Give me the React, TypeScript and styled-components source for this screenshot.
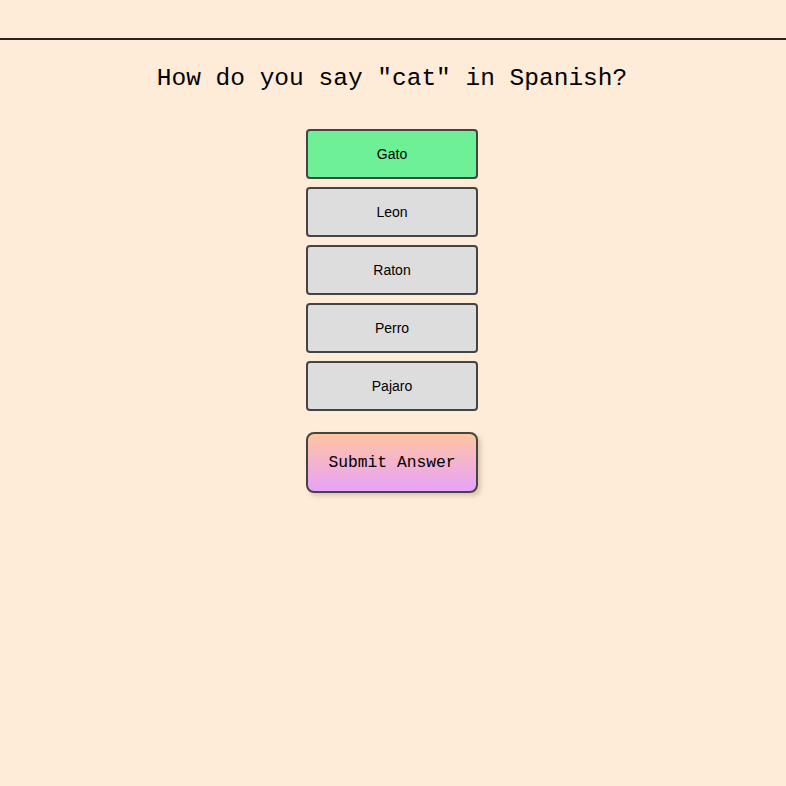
import React, { useState } from "react";
import styled, { createGlobalStyle } from "styled-components";

const GlobalStyle = createGlobalStyle`
  html, body {
    margin: 0;
    padding: 0;
    background: #feebd8;
  }
  body {
    font-family: "Liberation Sans", Arial, sans-serif;
    min-height: 786px;
  }
`;

const Header = styled.header`
  height: 38px;
  border-bottom: 2px solid #2a2220;
`;

const Main = styled.main`
  display: flex;
  flex-direction: column;
  align-items: center;
  padding-right: 2px;
`;

const Question = styled.h1`
  margin: 23px 0 34px;
  font-family: "Liberation Mono", "DejaVu Sans Mono", monospace;
  font-weight: 400;
  font-size: 24.5px;
  line-height: 32px;
  color: #000;
`;

const Options = styled.div`
  display: flex;
  flex-direction: column;
  gap: 8px;
`;

const Option = styled.button<{ $selected: boolean }>`
  width: 172px;
  height: 50px;
  box-sizing: border-box;
  border: 2px solid #444;
  border-radius: 4px;
  background: ${(p) => (p.$selected ? "#6ef096" : "#dddddd")};
  font-family: "Liberation Sans", Arial, sans-serif;
  font-size: 14px;
  color: #000;
  cursor: pointer;
  padding: 0;
`;

const Submit = styled.button`
  margin-top: 21px;
  width: 172px;
  height: 61px;
  box-sizing: border-box;
  border: 2px solid #444;
  border-radius: 8px;
  background: linear-gradient(180deg, #ffc59f 0%, #e7a2fb 100%);
  box-shadow: 3px 3px 4px rgba(120, 90, 50, 0.25);
  font-family: "Liberation Mono", "DejaVu Sans Mono", monospace;
  font-size: 16.3px;
  color: #000;
  cursor: pointer;
  padding: 0;
`;

const options = ["Gato", "Leon", "Raton", "Perro", "Pajaro"];

export default function App() {
  const [selected, setSelected] = useState("Gato");
  return (
    <>
      <GlobalStyle />
      <Header />
      <Main>
        <Question>How do you say "cat" in Spanish?</Question>
        <Options>
          {options.map((o) => (
            <Option key={o} $selected={selected === o} onClick={() => setSelected(o)}>
              {o}
            </Option>
          ))}
        </Options>
        <Submit>Submit Answer</Submit>
      </Main>
    </>
  );
}
